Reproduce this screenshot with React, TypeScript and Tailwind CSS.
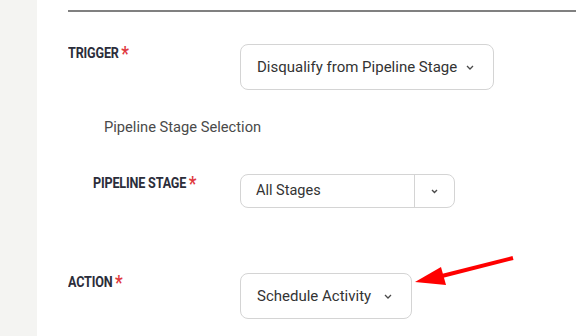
import React from "react";

const Chevron = ({ small }: { small?: boolean }) =>
  small ? (
    <svg width="7" height="5" viewBox="0 0 7 5" className="text-[#4a4a4a]">
      <path d="M1 1 L3.5 3.5 L6 1" fill="none" stroke="currentColor" strokeWidth="1.4" />
    </svg>
  ) : (
    <svg width="8" height="5" viewBox="0 0 8 5" className="text-[#4a4a4a]">
      <path d="M1 1 L4 4 L7 1" fill="none" stroke="currentColor" strokeWidth="1.3" />
    </svg>
  );

const Label = ({ text }: { text: string }) => (
  <div className="-mt-[1px] flex w-max origin-left scale-x-[0.84] items-start whitespace-nowrap text-[15px] leading-5 font-bold tracking-[-0.2px] text-[#2b2d3a] [font-family:Roboto,sans-serif]">
    <span>{text}</span>
    <span className="relative top-[1px] ml-[3px] text-[20px] leading-5 font-bold text-[#e0393e]">*</span>
  </div>
);

export default function App() {
  return (
    <div className="relative flex h-[336px] w-[576px] overflow-hidden bg-white [font-family:Roboto,'Noto_Sans',sans-serif]">
      {/* left rail */}
      <div className="w-[37px] shrink-0 bg-[#f4f4f2]" />

      <div className="flex-1 pl-[31px] pt-[10px]">
        <div className="h-[2px] bg-[#808080]" />

        {/* trigger */}
        <div className="mt-[32px] flex items-start">
          <div className="w-[172px]">
            <Label text="TRIGGER" />
          </div>
          <button className="flex h-[46px] w-[254px] items-center justify-between rounded-[8px] border border-[#d4d4d4] bg-white pl-[16px] pr-[19px] text-[15px] text-[#333]">
            <span>Disqualify from Pipeline Stage</span>
            <Chevron />
          </button>
        </div>

        <div className="mt-[27px] pl-[36px] text-[14.7px] leading-5 text-[#4a4a4a]">
          Pipeline Stage Selection
        </div>

        {/* pipeline stage */}
        <div className="mt-[37px] flex items-start">
          <div className="w-[172px] pl-[25px]">
            <Label text="PIPELINE STAGE" />
          </div>
          <div className="flex h-[34px] w-[215px] items-stretch rounded-[8px] border border-[#d4d4d4] bg-white text-[14.5px] text-[#333]">
            <div className="flex flex-1 items-center pl-[15px]">All Stages</div>
            <div className="flex w-[40px] items-center justify-center border-l border-[#d4d4d4]">
              <Chevron small />
            </div>
          </div>
        </div>

        {/* action */}
        <div className="mt-[65px] flex items-start">
          <div className="w-[172px]">
            <Label text="ACTION" />
          </div>
          <button className="flex h-[46px] w-[172px] items-center justify-between rounded-[8px] border border-[#d4d4d4] bg-white pl-[16px] pr-[19px] text-[15px] text-[#333]">
            <span>Schedule Activity</span>
            <Chevron />
          </button>
        </div>
      </div>

      {/* annotation arrow */}
      <svg className="pointer-events-none absolute left-0 top-0" width="576" height="336">
        <line x1="513" y1="258" x2="438" y2="277" stroke="#ff0000" strokeWidth="4" />
        <polygon points="415,282 441,267 446,285" fill="#ff0000" />
      </svg>
    </div>
  );
}
